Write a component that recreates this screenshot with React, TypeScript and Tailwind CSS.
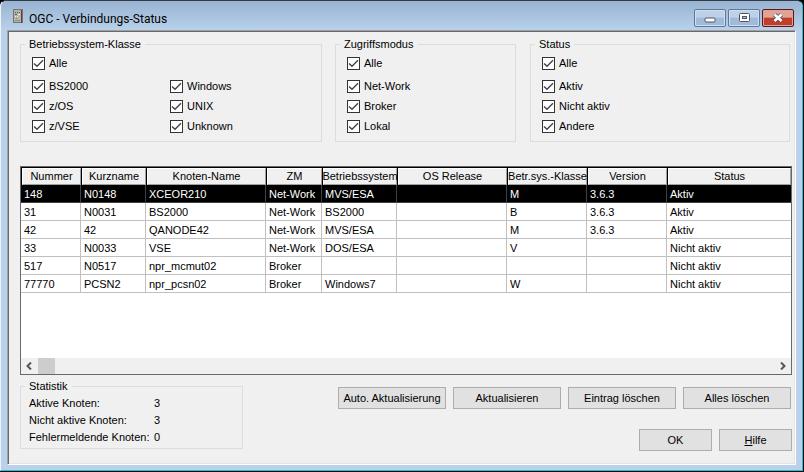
import { useState } from 'react'
import type { ReactNode } from 'react'

interface NodeRow {
  id: string
  shortName: string
  name: string
  mode: string
  os: string
  release: string
  osClass: string
  version: string
  status: string
}

const rows: NodeRow[] = [
  { id: '148', shortName: 'N0148', name: 'XCEOR210', mode: 'Net-Work', os: 'MVS/ESA', release: '', osClass: 'M', version: '3.6.3', status: 'Aktiv' },
  { id: '31', shortName: 'N0031', name: 'BS2000', mode: 'Net-Work', os: 'BS2000', release: '', osClass: 'B', version: '3.6.3', status: 'Aktiv' },
  { id: '42', shortName: '42', name: 'QANODE42', mode: 'Net-Work', os: 'MVS/ESA', release: '', osClass: 'M', version: '3.6.3', status: 'Aktiv' },
  { id: '33', shortName: 'N0033', name: 'VSE', mode: 'Net-Work', os: 'DOS/ESA', release: '', osClass: 'V', version: '', status: 'Nicht aktiv' },
  { id: '517', shortName: 'N0517', name: 'npr_mcmut02', mode: 'Broker', os: '', release: '', osClass: '', version: '', status: 'Nicht aktiv' },
  { id: '77770', shortName: 'PCSN2', name: 'npr_pcsn02', mode: 'Broker', os: 'Windows7', release: '', osClass: 'W', version: '', status: 'Nicht aktiv' },
]

const columns: { key: keyof NodeRow; label: string; width: string }[] = [
  { key: 'id', label: 'Nummer', width: 'w-[60px]' },
  { key: 'shortName', label: 'Kurzname', width: 'w-[65px]' },
  { key: 'name', label: 'Knoten-Name', width: 'w-[120px]' },
  { key: 'mode', label: 'ZM', width: 'w-[56px]' },
  { key: 'os', label: 'Betriebssystem', width: 'w-[75px]' },
  { key: 'release', label: 'OS Release', width: 'w-[110px]' },
  { key: 'osClass', label: 'Betr.sys.-Klasse', width: 'w-[80px]' },
  { key: 'version', label: 'Version', width: 'w-[80px]' },
  { key: 'status', label: 'Status', width: '' },
]

const stats = [
  { label: 'Aktive Knoten:', value: 3 },
  { label: 'Nicht aktive Knoten:', value: 3 },
  { label: 'Fehlermeldende Knoten:', value: 0 },
]

function Group({ title, className, children }: { title: string; className: string; children: ReactNode }) {
  return (
    <fieldset className={`min-w-0 border border-[#dcdcdc] px-1 ${className}`}>
      <legend className="px-1 leading-3">{title}</legend>
      {children}
    </fieldset>
  )
}

function Check({ label }: { label: string }) {
  return (
    <label className="flex h-5 items-center gap-1">
      <span className="grid size-[13px] shrink-0">
        <input
          type="checkbox"
          defaultChecked
          className="peer col-start-1 row-start-1 size-[13px] appearance-none border border-[#333] bg-white"
        />
        <svg
          viewBox="0 0 13 13"
          className="pointer-events-none invisible col-start-1 row-start-1 size-[13px] peer-checked:visible"
          fill="none"
          stroke="#444"
          strokeWidth="1.4"
        >
          <path d="M2 6.5 L5 9.3 L11 3.3" />
        </svg>
      </span>
      {label}
    </label>
  )
}

function PushButton({ className, children }: { className: string; children: ReactNode }) {
  return (
    <button
      type="button"
      className={`h-[22px] border border-[#adadad] bg-[#e1e1e1] hover:border-[#0078d7] hover:bg-[#e5f1fb] ${className}`}
    >
      {children}
    </button>
  )
}

function TitleButton({ label, close, children }: { label: string; close?: boolean; children: ReactNode }) {
  return (
    <button
      type="button"
      aria-label={label}
      className={`flex h-[18px] w-8 items-center justify-center rounded-xs border ${
        close
          ? 'border-[#5a1a1c] bg-linear-to-b from-[#e2a397] from-45% to-[#bf3f2a] to-50% inset-ring inset-ring-[#e0a195]'
          : 'border-[#5f7698] bg-linear-to-b from-[#bdd1e8] from-45% to-[#9fbada] to-50% inset-ring inset-ring-[#d0dff0]'
      }`}
    >
      {children}
    </button>
  )
}

function ServerIcon() {
  return (
    <svg viewBox="0 0 10 14" className="h-[14px] w-[10px]" shapeRendering="crispEdges">
      <rect width="10" height="14" fill="#77736f" />
      <rect x="1" y="1" width="7" height="12" fill="#b3b1ab" />
      <rect x="8" y="1" width="1" height="13" fill="#6d3c34" />
      <path d="M2 3h1v1H2zM4 3h1v1H4zM6 3h1v1H6zM2 5h2v1H2z" fill="#595b5c" />
      <path d="M5 5h2v1H5zM2 7h1v1H2zM4 7h1v1H4z" fill="#f1efe8" />
      <path d="M3 9h1v1H3z" fill="#6fa85a" />
      <path d="M5 9h2v1H5z" fill="#d5cf58" />
      <path d="M2 11h5v1H2z" fill="#95928d" />
    </svg>
  )
}

export default function App() {
  const [selected, setSelected] = useState('148')

  return (
    <div className="flex min-h-screen flex-col border-r border-b border-black bg-black font-['Liberation_Sans',Arial,sans-serif] text-[11px] leading-[14px] text-black">
      <div className="flex grow flex-col rounded-t-md border-t border-r border-b border-l border-t-[#333b44] border-r-[#17c5dc] border-b-[#17c5dc] border-l-[#eef4fb] bg-[#b9d1ea] px-[6px] pb-[5px]">
        <header className="-mx-[6px] flex h-[29px] items-center rounded-t-md bg-linear-to-b from-[#98b4d2] to-[#b9d1ea] pr-2 pl-3">
          <ServerIcon />
          <h1 className="ml-[6px] grow pt-[6px] font-['Roboto',sans-serif] text-[12px] leading-4">OGC - Verbindungs-Status</h1>
          <div className="flex gap-[2px] pt-[5px]">
            <TitleButton label="Minimieren">
              <svg viewBox="0 0 12 12" className="size-3">
                <rect x="1" y="6" width="10" height="4" rx="1" fill="#fff" stroke="#535666" />
              </svg>
            </TitleButton>
            <TitleButton label="Maximieren">
              <svg viewBox="0 0 12 12" className="size-3">
                <rect x="1.5" y="1.5" width="10" height="8" rx="1" fill="#fff" stroke="#535666" />
                <rect x="4.5" y="4.5" width="4" height="2" fill="#a3bedd" stroke="#535666" />
              </svg>
            </TitleButton>
            <TitleButton label="Schließen" close>
              <svg viewBox="0 0 12 12" className="size-3">
                <path d="M2.5 2.5 L9.5 9 M9.5 2.5 L2.5 9" stroke="#535666" strokeWidth="4.4" />
                <path d="M2.5 2.5 L9.5 9 M9.5 2.5 L2.5 9" stroke="#fff" strokeWidth="2.6" />
              </svg>
            </TitleButton>
          </div>
        </header>

        <main className="flex grow flex-col border border-t-[#a0a0a0] border-r-white border-b-white border-l-[#a0a0a0] bg-[#f0f0f0] pt-[7px] pr-[3px] pb-[13px] pl-3 shadow-[inset_1px_1px_#696969,inset_-1px_-1px_#e3e3e3]">
          <div className="flex pr-[2px]">
            <Group title="Betriebssystem-Klasse" className="mr-[13px] w-[302px] pb-[5px]">
              <div className="grid grid-cols-[138px_1fr] pt-[3px] pl-[7px]">
                <div className="col-span-2 pb-[3px]">
                  <Check label="Alle" />
                </div>
                <Check label="BS2000" />
                <Check label="Windows" />
                <Check label="z/OS" />
                <Check label="UNIX" />
                <Check label="z/VSE" />
                <Check label="Unknown" />
              </div>
            </Group>
            <Group title="Zugriffsmodus" className="mr-[14px] w-[181px] pb-[5px]">
              <div className="pt-[3px] pl-[7px]">
                <div className="pb-[3px]">
                  <Check label="Alle" />
                </div>
                <Check label="Net-Work" />
                <Check label="Broker" />
                <Check label="Lokal" />
              </div>
            </Group>
            <Group title="Status" className="grow pb-[5px]">
              <div className="pt-[3px] pl-[7px]">
                <div className="pb-[3px]">
                  <Check label="Alle" />
                </div>
                <Check label="Aktiv" />
                <Check label="Nicht aktiv" />
                <Check label="Andere" />
              </div>
            </Group>
          </div>

          {/* Node list */}
          <section className="mt-6 flex grow flex-col border border-[#696969] bg-white">
            <div className="grow overflow-hidden">
              <table className="w-full table-fixed border-separate border-spacing-0">
                <thead>
                  <tr className="bg-black">
                    {columns.map((c) => (
                      <th key={c.key} className={`h-[18px] p-0 pt-px pl-px font-normal whitespace-nowrap ${c.width}`}>
                        <div className="flex h-[17px] justify-center border border-t-white border-r-[#a0a0a0] border-b-[#a0a0a0] border-l-white bg-[#f0f0f0]">
                          {c.label}
                        </div>
                      </th>
                    ))}
                  </tr>
                </thead>
                <tbody>
                  {rows.map((row) => (
                    <tr
                      key={row.id}
                      onClick={() => setSelected(row.id)}
                      className={row.id === selected ? 'bg-black text-white' : ''}
                    >
                      {columns.map((c) => (
                        <td
                          key={c.key}
                          className={`h-[18px] border-b p-0 pl-[3px] not-last:border-r ${
                            row.id === selected ? 'border-[#404040]' : 'border-[#c0c0c0]'
                          }`}
                        >
                          {row[c.key]}
                        </td>
                      ))}
                    </tr>
                  ))}
                </tbody>
              </table>
            </div>
            <div className="flex h-4 items-center bg-[#f0f0f0] px-[5px]">
              <svg viewBox="0 0 6 8" className="h-2 w-[6px]" fill="none" stroke="#555" strokeWidth="2">
                <path d="M5 0.5 L1.5 4 L5 7.5" />
              </svg>
              <div className="ml-[6px] h-full w-[17px] bg-[#cdcdcd]" />
              <svg viewBox="0 0 6 8" className="ml-auto h-2 w-[6px]" fill="none" stroke="#555" strokeWidth="2">
                <path d="M1 0.5 L4.5 4 L1 7.5" />
              </svg>
            </div>
          </section>

          <div className="flex items-start justify-between pt-[5px]">
            <Group title="Statistik" className="w-[223px] pb-[2px]">
              <dl className="px-1 pt-[3px] leading-[17px]">
                {stats.map((s) => (
                  <div key={s.label} className="flex">
                    <dt className="w-[125px]">{s.label}</dt>
                    <dd>{s.value}</dd>
                  </div>
                ))}
              </dl>
            </Group>
            <div className="flex flex-col items-end gap-5 pt-[7px]">
              <div className="flex gap-[7px] pr-px">
                <PushButton className="w-[108px]">Auto. Aktualisierung</PushButton>
                <PushButton className="w-[108px]">Aktualisieren</PushButton>
                <PushButton className="w-[108px]">Eintrag löschen</PushButton>
                <PushButton className="w-[108px]">Alles löschen</PushButton>
              </div>
              <div className="flex gap-[7px]">
                <PushButton className="w-[73px]">OK</PushButton>
                <PushButton className="w-[73px]">
                  <span className="underline">H</span>ilfe
                </PushButton>
              </div>
            </div>
          </div>
        </main>
      </div>
    </div>
  )
}
